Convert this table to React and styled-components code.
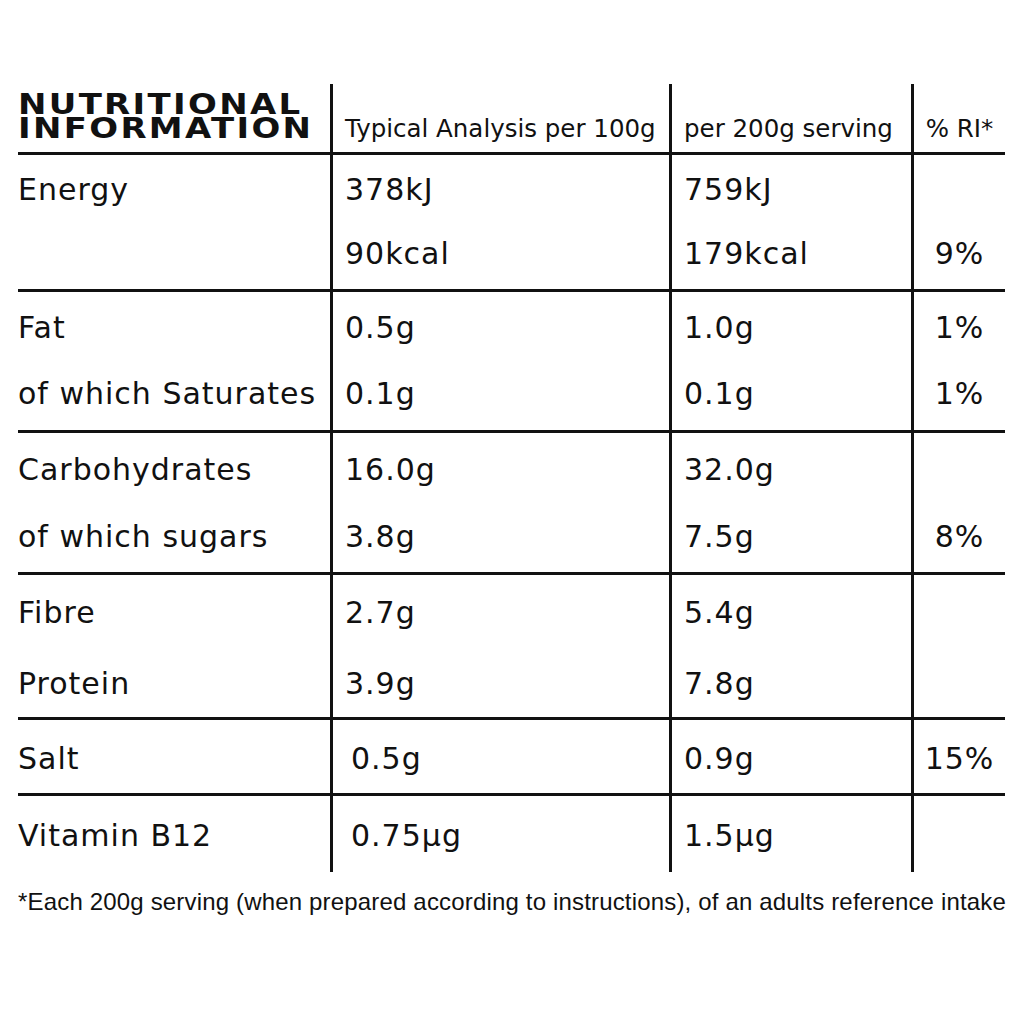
import React from "react";
import styled, { createGlobalStyle } from "styled-components";

const GlobalStyle = createGlobalStyle`
    *, *::before, *::after {
        box-sizing: border-box;
    }

    body {
        margin: 0;
        background: #ffffff;
        color: #111111;
    }
`;

const Page = styled.div`
    width: 1024px;
    padding: 84px 0 0 18px;
    font-family: "DejaVu Sans", "Liberation Sans", sans-serif;
    color: #111111;
`;

const Table = styled.div`
    width: 987px;
`;

const Row = styled.div`
    display: grid;
    grid-template-columns: 312px 339px 242px 94px;
    height: ${(p) => p.$h}px;
    line-height: ${(p) => p.$lh || 64}px;
    border-bottom: ${(p) => (p.$last ? "none" : "3px solid #111111")};
`;

const Cell = styled.div`
    display: flex;
    flex-direction: column;
    justify-content: center;
    align-items: ${(p) => (p.$center ? "center" : "flex-start")};
    padding-left: ${(p) => (p.$center ? 0 : p.$pad ?? 12)}px;
    padding-top: ${(p) => p.$top || 0}px;
    border-left: ${(p) => (p.$first ? "none" : "3px solid #111111")};
    font-size: 30px;
    letter-spacing: 1px;
    white-space: nowrap;
`;

const HeadCell = styled(Cell)`
    justify-content: flex-end;
    padding-bottom: ${(p) => (p.$first ? 12 : 8)}px;
    font-size: 24.5px;
    line-height: 30px;
    letter-spacing: 0;
`;

const Title = styled.div`
    font-weight: 700;
    font-size: 29px;
    line-height: 24px;
    letter-spacing: 2px;
    transform: scaleX(1.17);
    transform-origin: left center;
`;

const Line = styled.div``;

const Footer = styled.p`
    margin: 15px 0 0;
    font-family: "Liberation Sans", sans-serif;
    font-size: 24px;
    line-height: 30px;
    letter-spacing: 0.17px;
    white-space: nowrap;
`;

const groups = [
    {
        h: 137,
        lh: 64,
        rows: [
            ["Energy", "378kJ", "759kJ", ""],
            ["", "90kcal", "179kcal", "9%"],
        ],
    },
    {
        h: 141,
        lh: 66,
        rows: [
            ["Fat", "0.5g", "1.0g", "1%"],
            ["of which Saturates", "0.1g", "0.1g", "1%"],
        ],
    },
    {
        h: 142,
        lh: 67,
        rows: [
            ["Carbohydrates", "16.0g", "32.0g", ""],
            ["of which sugars", "3.8g", "7.5g", "8%"],
        ],
    },
    {
        h: 145,
        lh: 71,
        top: 2,
        rows: [
            ["Fibre", "2.7g", "5.4g", ""],
            ["Protein", "3.9g", "7.8g", ""],
        ],
    },
    {
        h: 76,
        lh: 64,
        top: 5,
        indent: 18,
        rows: [["Salt", "0.5g", "0.9g", "15%"]],
    },
    {
        h: 76,
        lh: 64,
        top: 3,
        indent: 18,
        rows: [["Vitamin B12", "0.75µg", "1.5µg", ""]],
    },
];

const column = (rows, i) =>
    rows.map((r, k) => <Line key={k}>{r[i] || "\u00a0"}</Line>);

export default function App() {
    return (
        <>
            <GlobalStyle />
            <Page>
                <Table>
                    <Row $h={71}>
                        <HeadCell $first $pad={0}>
                            <Title>
                                NUTRITIONAL
                                <br />
                                INFORMATION
                            </Title>
                        </HeadCell>
                        <HeadCell>Typical Analysis per 100g</HeadCell>
                        <HeadCell>per 200g serving</HeadCell>
                        <HeadCell $center>% RI*</HeadCell>
                    </Row>
                    {groups.map((g, i) => (
                        <Row
                            key={i}
                            $h={g.h}
                            $lh={g.lh}
                            $last={i === groups.length - 1}
                        >
                            <Cell $first $pad={0} $top={g.top}>
                                {column(g.rows, 0)}
                            </Cell>
                            <Cell $pad={g.indent} $top={g.top}>
                                {column(g.rows, 1)}
                            </Cell>
                            <Cell $top={g.top}>{column(g.rows, 2)}</Cell>
                            <Cell $center $top={g.top}>
                                {column(g.rows, 3)}
                            </Cell>
                        </Row>
                    ))}
                </Table>
                <Footer>
                    *Each 200g serving (when prepared according to
                    instructions), of an adults reference intake
                </Footer>
            </Page>
        </>
    );
}
